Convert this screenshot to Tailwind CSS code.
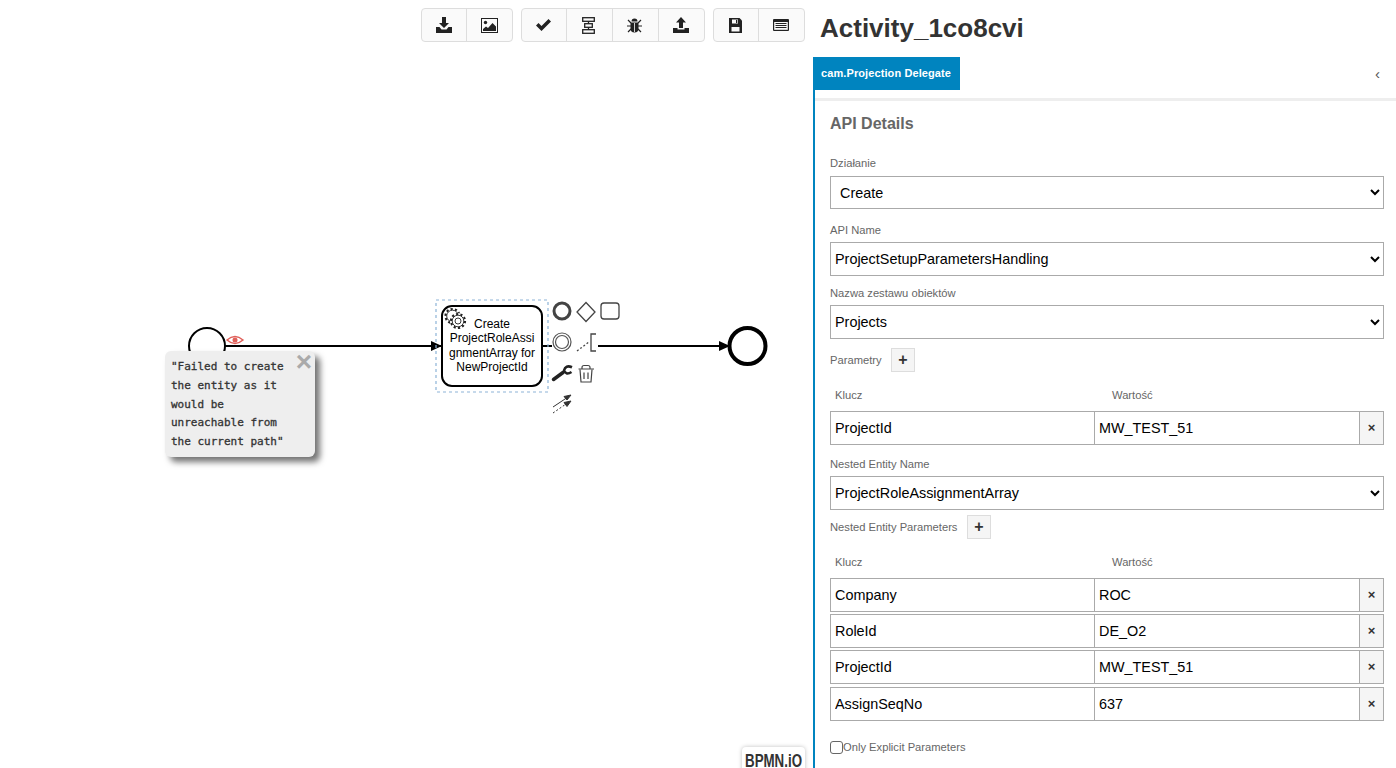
<!DOCTYPE html>
<html lang="en">
<head>
  <meta charset="UTF-8" />
  <title>Activity_1co8cvi</title>
  <script src="https://cdn.jsdelivr.net/npm/@tailwindcss/browser@4"></script>
</head>
<body class="bg-white font-['Liberation_Sans',sans-serif] overflow-hidden">
  <div class="flex h-[768px] w-[1396px] overflow-hidden">

    <!-- Canvas -->
    <div class="relative w-[813px] h-full shrink-0">
      <!-- Toolbar -->
      <div class="flex justify-end gap-2 pt-2 pr-2 text-[#333]">
        <div class="flex h-[34px] border border-[#ddd] rounded bg-[#fafafa]">
          <button class="w-[45px] flex items-center justify-center border-r border-[#ddd]">
            <svg width="16" height="16" viewBox="0 0 16 16" fill="#222"><path d="M6 0h4v6h3l-5 5-5-5h3z"/><path d="M0 10h3.500l2 2.500h5l2-2.500H16v6H0z"/></svg>
          </button>
          <button class="w-[45px] flex items-center justify-center">
            <svg width="17" height="15" viewBox="0 0 17 15"><rect x=".5" y=".5" width="16" height="14" fill="none" stroke="#222"/><circle cx="4.500" cy="4.500" r="1.700" fill="#222"/><path d="M2 13V11l3-2.500 2 1.500 4.500-5L15 8.500V13z" fill="#222"/></svg>
          </button>
        </div>
        <div class="flex h-[34px] border border-[#ddd] rounded bg-[#fafafa]">
          <button class="w-[45px] pr-[2px] flex items-center justify-center border-r border-[#ddd]">
            <svg width="15" height="12" viewBox="0 0 15 12" fill="#222"><path d="M0 6.500 2.500 4l3 3L12.500 0 15 2.500 5.500 12z"/></svg>
          </button>
          <button class="w-[46px] pr-[2px] flex items-center justify-center border-r border-[#ddd]">
            <svg width="13" height="17" viewBox="0 0 13 17" fill="none" stroke="#222" stroke-width="1.300"><rect x=".7" y=".7" width="11.600" height="3.600"/><rect x="2.700" y="6.700" width="7.600" height="3.600"/><rect x=".7" y="12.700" width="11.600" height="3.600"/><path d="M6.500 4.300v2.400M6.500 10.300v2.400"/></svg>
          </button>
          <button class="w-[46px] pr-[2px] flex items-center justify-center border-r border-[#ddd]">
            <svg width="15" height="15" viewBox="0 0 15 15" fill="#222"><path d="M4.500 3.500a3 3 0 0 1 6 0z"/><path d="M3.500 4.500h8v6a4 4 0 0 1-8 0z"/><path d="M1 2l3 3M14 2l-3 3M0 8h4M15 8h-4M1 14l3-3M14 14l-3-3" stroke="#222" stroke-width="1.200"/><path d="M7.100 5v9h.8V5z" fill="#fafafa"/></svg>
          </button>
          <button class="w-[45px] pr-[2px] flex items-center justify-center">
            <svg width="16" height="16" viewBox="0 0 16 16" fill="#222"><path d="M8 0l5 5.500h-3V11H6V5.500H3z"/><path d="M0 11h4.500v1.500h7V11H16v5H0z"/></svg>
          </button>
        </div>
        <div class="flex h-[34px] border border-[#ddd] rounded bg-[#fafafa]">
          <button class="w-[45px] pr-[2px] flex items-center justify-center border-r border-[#ddd]">
            <svg width="13" height="15" viewBox="0 0 13 15"><path d="M0 0h10.500L13 2.500V15H0z" fill="#222"/><rect x="3" y="1.500" width="6" height="4" fill="#fafafa"/><rect x="7" y="2" width="1.300" height="3" fill="#222"/><rect x="2.500" y="9" width="8" height="4.500" fill="#fafafa"/></svg>
          </button>
          <button class="w-[45px] pr-[2px] flex items-center justify-center">
            <svg width="16" height="12" viewBox="0 0 16 12"><rect width="16" height="12" rx="1" fill="#222"/><rect x="1.200" y="3" width="13.600" height="7.800" fill="#fafafa"/><path d="M2.500 4.500h11M2.500 6.500h11M2.500 8.500h11" stroke="#222" stroke-width="1"/></svg>
          </button>
        </div>
      </div>

      <!-- Diagram -->
      <svg class="absolute left-0 top-0" width="813" height="768" viewBox="0 0 813 768">
        <defs>
          <marker id="arrow" viewBox="0 0 10 10" refX="10" refY="5" markerWidth="5.500" markerHeight="5.500" orient="auto"><path d="M0 0.500 10 5 0 9.500z" fill="#000"/></marker>
        </defs>
        <circle cx="207" cy="346" r="18" fill="#fff" stroke="#000" stroke-width="2"/>
        <path d="M225 346H442" stroke="#000" stroke-width="2" marker-end="url(#arrow)"/>
        <path d="M543 346H552" stroke="#000" stroke-width="2"/>
        <path d="M598 346H730" stroke="#000" stroke-width="2" marker-end="url(#arrow)"/>
        <circle cx="747.500" cy="346" r="18" fill="#fff" stroke="#000" stroke-width="4"/>
        <!-- Eye -->
        <path d="M227 340q8-7 16 0q-8 7-16 0z" fill="none" stroke="#e0605a" stroke-width="1.500"/>
        <circle cx="235" cy="340" r="2.500" fill="#e0605a"/>
        <!-- Task -->
        <rect x="436" y="300" width="112" height="92" fill="none" stroke="#8db4d8" stroke-width="1.200" stroke-dasharray="3 3"/>
        <rect x="442" y="306" width="100" height="80" rx="10" fill="#fff" stroke="#000" stroke-width="2"/>
        <g fill="#fff" stroke="#222">
          <circle cx="452.500" cy="316" r="7" fill="none" stroke-width="2.200" stroke-dasharray="2.200 2.200"/>
          <circle cx="452.500" cy="316" r="5.800" stroke-width=".9"/>
          <circle cx="458" cy="321" r="7" fill="#fff" stroke="#fff" stroke-width="2"/>
          <circle cx="458" cy="321" r="7" fill="none" stroke-width="2.200" stroke-dasharray="2.200 2.200"/>
          <circle cx="458" cy="321" r="5.800" stroke-width=".9"/>
          <circle cx="458" cy="321" r="3" stroke-width=".9"/>
        </g>
        <g font-family="Liberation Sans" font-size="12" text-anchor="middle" fill="#000">
          <text x="492" y="328">Create</text>
          <text x="492" y="342">ProjectRoleAssi</text>
          <text x="492" y="357">gnmentArray for</text>
          <text x="492" y="371">NewProjectId</text>
        </g>
        <!-- Context pad -->
        <circle cx="562" cy="311" r="8" fill="none" stroke="#444" stroke-width="3"/>
        <path d="M586 302.500 595 312 586 321.500 577 312z" fill="none" stroke="#444" stroke-width="1.300"/>
        <rect x="601" y="303" width="18" height="16" rx="3" fill="none" stroke="#444" stroke-width="1.300"/>
        <circle cx="562" cy="342" r="9" fill="none" stroke="#555" stroke-width="1.200"/>
        <circle cx="562" cy="342" r="6.500" fill="none" stroke="#555" stroke-width="1.200"/>
        <path d="M577 351 589 342" stroke="#444" stroke-width="1.300" stroke-dasharray="2 2" fill="none"/>
        <path d="M596 334H591V351H596" stroke="#444" stroke-width="1.300" fill="none"/>
        <path d="M553.500 379.500 563 372.500" stroke="#222" stroke-width="3.500" stroke-linecap="round"/>
        <path d="M572 367.300Q565.500 364.500 564 370.500Q566 375.500 571.500 372" fill="none" stroke="#222" stroke-width="2.600"/>
        <g fill="none" stroke="#444" stroke-width="1.200">
          <path d="M578.500 369H594M582 369v-1.500q0-2 2-2h4q2 0 2 2v1.500"/>
          <path d="M580 369.500 581 382h10l1-12.500M584 372.500v6.500M588 372.500v6.500"/>
        </g>
        <g fill="#333" stroke="#333" stroke-width="1">
          <path d="M553 407 568 397" fill="none"/>
          <path d="M571 395l-7 1.500 3 3.500z"/>
          <path d="M553 413 566 404" fill="none" stroke-dasharray="2 2"/>
          <path d="M571 401l-7 1.500 3 4z"/>
        </g>
      </svg>

      <!-- Error overlay -->
      <div class="absolute left-[165px] top-[351px] w-[150px] h-[106px] rounded-md bg-[#eeeeee] shadow-[5px_5px_6px_rgba(0,0,0,0.55)] pl-[6px] pt-[5px] font-['DejaVu_Sans_Mono',monospace] text-[11px] leading-[18.800px] text-[#333] [-webkit-text-stroke:0.3px_#333]">
        <div class="whitespace-pre mt-[2px]">"Failed to create
the entity as it
would be
unreachable from
the current path"</div>
        <span class="absolute right-[3px] top-0 font-['Liberation_Sans',sans-serif] text-[28px] leading-[22px] font-bold text-[#aaa] [-webkit-text-stroke:0]">×</span>
      </div>

      <!-- Watermark -->
      <div class="absolute right-[8px] top-[747px] w-[63px] h-[30px] bg-white rounded-t shadow-[0_0_4px_rgba(0,0,0,0.25)] text-center text-[18px] leading-[26px] font-bold text-[#333] pt-[1px]">
        <span class="inline-block scale-x-[0.74] whitespace-nowrap -mx-[10px]">BPMN.iO</span>
      </div>
    </div>

    <!-- Properties panel -->
    <div class="flex-1 flex flex-col min-w-0">
      <div class="h-[57px] pl-[7px] flex items-start">
        <h1 class="text-[26px] leading-[57px] font-bold text-[#333]">Activity_1co8cvi</h1>
      </div>
      <div class="flex items-start justify-between h-[44px] border-b-[3px] border-[#eee]">
        <div class="w-[147px] h-[33px] bg-[#0084bf] text-white text-[11px] tracking-[0.1px] font-bold leading-[33px] pl-[8px]">cam.Projection Delegate</div>
        <span class="mr-[16px] mt-[9px] text-[15px] leading-[16px] text-[#555]">‹</span>
      </div>
      <div class="flex-1 border-l-2 border-[#0084bf] -mt-[11px] pl-[15px] pr-[12px] pt-[24px] text-[#666]">
        <h2 class="text-[16px] leading-[20px] font-bold text-[#666] mb-[23px]">API Details</h2>

        <label class="block text-[11.200px] leading-[13px] mb-[6px]">Działanie</label>
        <select class="block w-full h-[33px] border border-[#aaa] bg-white text-black text-[14.400px] pl-[5px]"><option>Create</option></select>

        <label class="block text-[11.200px] leading-[13px] mt-[15px] mb-[5px]">API Name</label>
        <select class="block w-full h-[34px] border border-[#aaa] bg-white text-black text-[14.400px]"><option>ProjectSetupParametersHandling</option></select>

        <label class="block text-[11.200px] leading-[13px] mt-[11px] mb-[5px]">Nazwa zestawu obiektów</label>
        <select class="block w-full h-[34px] border border-[#aaa] bg-white text-black text-[14.400px]"><option>Projects</option></select>

        <div class="flex items-center h-[24px] mt-[9px] text-[11.200px]">
          <span class="w-[61px]">Parametry</span>
          <button class="w-[24px] h-[24px] border border-[#ddd] bg-[#f5f5f5] text-[#333] text-[16px] leading-[20px] font-bold">+</button>
        </div>

        <div class="flex text-[11.200px] leading-[13px] mt-[17px] mb-[9px]"><span class="w-[282px] pl-[5px]">Klucz</span><span>Wartość</span></div>
        <div class="flex h-[34px] text-[14.400px] text-black">
          <input value="ProjectId" class="w-[265px] border border-[#aaa] pl-[4px] pt-[2px]"/>
          <input value="MW_TEST_51" class="w-[265px] border border-l-0 border-[#aaa] pl-[4px] pt-[2px]"/>
          <button class="w-[24px] border border-l-0 border-[#aaa] bg-[#f5f5f5] text-[13px] font-bold text-[#333]">×</button>
        </div>

        <label class="block text-[11.200px] leading-[13px] mt-[13px] mb-[5px]">Nested Entity Name</label>
        <select class="block w-full h-[34px] border border-[#aaa] bg-white text-black text-[14.400px]"><option>ProjectRoleAssignmentArray</option></select>

        <div class="flex items-center h-[24px] mt-[5px] text-[11.200px]">
          <span class="w-[137px]">Nested Entity Parameters</span>
          <button class="w-[24px] h-[24px] border border-[#ddd] bg-[#f5f5f5] text-[#333] text-[16px] leading-[20px] font-bold">+</button>
        </div>

        <div class="flex text-[11.200px] leading-[13px] mt-[17px] mb-[9px]"><span class="w-[282px] pl-[5px]">Klucz</span><span>Wartość</span></div>
        <div class="flex flex-col gap-[2px] text-[14.400px] text-black">
          <div class="flex h-[34px]">
            <input value="Company" class="w-[265px] border border-[#aaa] pl-[4px] pt-[2px]"/>
            <input value="ROC" class="w-[265px] border border-l-0 border-[#aaa] pl-[4px] pt-[2px]"/>
            <button class="w-[24px] border border-l-0 border-[#aaa] bg-[#f5f5f5] text-[13px] font-bold text-[#333]">×</button>
          </div>
          <div class="flex h-[34px]">
            <input value="RoleId" class="w-[265px] border border-[#aaa] pl-[4px] pt-[2px]"/>
            <input value="DE_O2" class="w-[265px] border border-l-0 border-[#aaa] pl-[4px] pt-[2px]"/>
            <button class="w-[24px] border border-l-0 border-[#aaa] bg-[#f5f5f5] text-[13px] font-bold text-[#333]">×</button>
          </div>
          <div class="flex h-[34px]">
            <input value="ProjectId" class="w-[265px] border border-[#aaa] pl-[4px] pt-[2px]"/>
            <input value="MW_TEST_51" class="w-[265px] border border-l-0 border-[#aaa] pl-[4px] pt-[2px]"/>
            <button class="w-[24px] border border-l-0 border-[#aaa] bg-[#f5f5f5] text-[13px] font-bold text-[#333]">×</button>
          </div>
          <div class="flex h-[34px] mt-[1px]">
            <input value="AssignSeqNo" class="w-[265px] border border-[#aaa] pl-[4px] pt-[2px]"/>
            <input value="637" class="w-[265px] border border-l-0 border-[#aaa] pl-[4px] pt-[2px]"/>
            <button class="w-[24px] border border-l-0 border-[#aaa] bg-[#f5f5f5] text-[13px] font-bold text-[#333]">×</button>
          </div>
        </div>

        <label class="flex items-center mt-[20px] text-[11.200px] leading-[13px]">
          <span class="w-[13px] h-[13px] border border-[#666] rounded-[3px] bg-white"></span>Only Explicit Parameters
        </label>
      </div>
    </div>
  </div>
</body>
</html>
